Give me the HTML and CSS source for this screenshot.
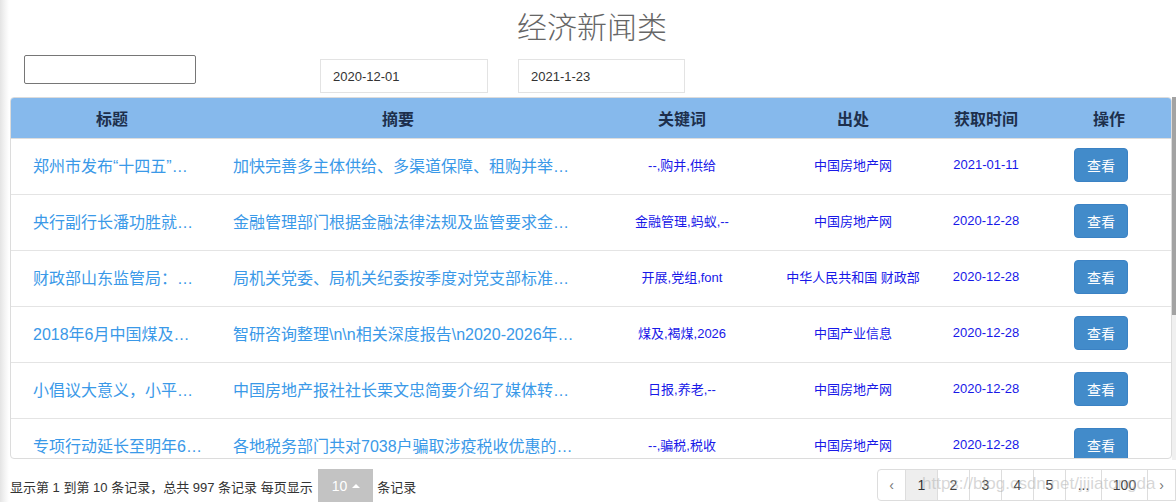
FILE: index.html
```html
<!DOCTYPE html>
<html lang="zh-CN">
<head>
<meta charset="utf-8">
<title>经济新闻类</title>
<link rel="stylesheet" href="styles.css">
</head>
<body>
<div class="page">
  <h1 class="title">经济新闻类</h1>
  <div class="filters">
    <input class="search" type="text">
    <div class="date-box first">2020-12-01</div>
    <div class="date-box second">2021-1-23</div>
  </div>
  <div class="table-area">
    <div class="table-wrap">
      <table class="news">
        <colgroup>
          <col class="c-title"><col class="c-summary"><col class="c-kw"><col class="c-src"><col class="c-date"><col class="c-op">
        </colgroup>
        <thead>
          <tr><th>标题</th><th>摘要</th><th>关键词</th><th>出处</th><th>获取时间</th><th>操作</th></tr>
        </thead>
        <tbody>
          <tr>
            <td class="t-title">郑州市发布“十四五”…</td>
            <td class="t-summary">加快完善多主体供给、多渠道保障、租购并举…</td>
            <td class="t-small">--,购并,供给</td>
            <td class="t-small">中国房地产网</td>
            <td class="t-date">2021-01-11</td>
            <td class="t-op"><button class="view-btn">查看</button></td>
          </tr>
          <tr>
            <td class="t-title">央行副行长潘功胜就…</td>
            <td class="t-summary">金融管理部门根据金融法律法规及监管要求金…</td>
            <td class="t-small">金融管理,蚂蚁,--</td>
            <td class="t-small">中国房地产网</td>
            <td class="t-date">2020-12-28</td>
            <td class="t-op"><button class="view-btn">查看</button></td>
          </tr>
          <tr>
            <td class="t-title">财政部山东监管局：…</td>
            <td class="t-summary">局机关党委、局机关纪委按季度对党支部标准…</td>
            <td class="t-small">开展,党组,font</td>
            <td class="t-small">中华人民共和国 财政部</td>
            <td class="t-date">2020-12-28</td>
            <td class="t-op"><button class="view-btn">查看</button></td>
          </tr>
          <tr>
            <td class="t-title">2018年6月中国煤及…</td>
            <td class="t-summary">智研咨询整理\n\n相关深度报告\n2020-2026年…</td>
            <td class="t-small">煤及,褐煤,2026</td>
            <td class="t-small">中国产业信息</td>
            <td class="t-date">2020-12-28</td>
            <td class="t-op"><button class="view-btn">查看</button></td>
          </tr>
          <tr>
            <td class="t-title">小倡议大意义，小平…</td>
            <td class="t-summary">中国房地产报社社长栗文忠简要介绍了媒体转…</td>
            <td class="t-small">日报,养老,--</td>
            <td class="t-small">中国房地产网</td>
            <td class="t-date">2020-12-28</td>
            <td class="t-op"><button class="view-btn">查看</button></td>
          </tr>
          <tr>
            <td class="t-title">专项行动延长至明年6…</td>
            <td class="t-summary">各地税务部门共对7038户骗取涉疫税收优惠的…</td>
            <td class="t-small">--,骗税,税收</td>
            <td class="t-small">中国房地产网</td>
            <td class="t-date">2020-12-28</td>
            <td class="t-op"><button class="view-btn">查看</button></td>
          </tr>
        </tbody>
      </table>
    </div>
    <div class="scrollbar"><div class="thumb"></div></div>
  </div>
  <div class="footer">
    <div class="info">
      <span>显示第 1 到第 10 条记录，总共 997 条记录 每页显示</span>
      <span class="size-btn">10 <span class="caret"></span></span>
      <span>条记录</span>
    </div>
    <ul class="pagination">
      <li class="pg arrow">‹</li>
      <li class="pg active">1</li>
      <li class="pg">2</li>
      <li class="pg">3</li>
      <li class="pg">4</li>
      <li class="pg">5</li>
      <li class="pg gap">...</li>
      <li class="pg last">100</li>
      <li class="pg arrow">›</li>
    </ul>
  </div>
  <div class="watermark">https://blog.csdn.net/jijiatongda</div>
</div>
</body>
</html>
```

FILE: styles.css
```css
html, body {
  margin: 0;
  padding: 0;
  overflow: hidden;
}

body {
  background: linear-gradient(to right, #e4e4e4 0, #f4f4f4 5px, #ffffff 9px);
  font-family: "Liberation Sans", "Noto Sans CJK SC", sans-serif;
  color: #333;
}

.page {
  position: relative;
  width: 1176px;
  height: 502px;
  overflow: hidden;
}

.title {
  margin: 0;
  height: 55px;
  line-height: 56px;
  padding-left: 8px;
  text-align: center;
  font-size: 30px;
  font-weight: 300;
  color: #666;
}

.filters {
  display: flex;
  align-items: flex-start;
  height: 42px;
}

.search {
  margin: 0 0 0 24px;
  width: 172px;
  height: 29px;
  box-sizing: border-box;
  border: 1px solid #767676;
  border-radius: 2px;
  padding: 0;
  background: #fff;
}

.date-box {
  display: flex;
  align-items: center;
  box-sizing: border-box;
  height: 34px;
  width: 168px;
  margin-top: 4px;
  padding-left: 12px;
  border: 1px solid #e3e3e3;
  font-size: 13px;
  color: #333;
  background: #fff;
}

.date-box.first {
  margin-left: 124px;
}

.date-box.second {
  margin-left: 30px;
  width: 167px;
}

.table-area {
  display: flex;
  margin-left: 10px;
  height: 363px;
}

.table-wrap {
  width: 1162px;
  height: 362px;
  box-sizing: border-box;
  border: 1px solid #dcdcdc;
  border-radius: 4px;
  overflow: hidden;
  background: #fff;
}

.scrollbar {
  width: 4px;
  height: 363px;
  background: #f0f0f0;
}

.thumb {
  height: 218px;
  background: #a3a3a3;
}

.news {
  width: 1160px;
  table-layout: fixed;
  border-collapse: collapse;
}

.c-title { width: 202px; }
.c-summary { width: 370px; }
.c-kw { width: 198px; }
.c-src { width: 144px; }
.c-date { width: 122px; }
.c-op { width: 124px; }

.news th {
  height: 40px;
  padding: 0;
  background: #86b9ec;
  border-bottom: 1px solid #dddddd;
  font-size: 16px;
  font-weight: bold;
  color: #1d2f4c;
  text-align: center;
  vertical-align: middle;
}

.news td {
  height: 51px;
  padding: 0 0 4px 0;
  border-bottom: 1px solid #e4e4e4;
  text-align: center;
  vertical-align: middle;
  white-space: nowrap;
  overflow: hidden;
}

.news td.t-title {
  text-align: left;
  padding-left: 22px;
  font-size: 16px;
  color: #3a99e8;
}

.news td.t-summary {
  text-align: left;
  padding-left: 20px;
  font-size: 16px;
  color: #3a99e8;
}

.news td.t-small {
  font-size: 13px;
  color: #1818e8;
}

.news td.t-date {
  font-size: 13px;
  color: #1818e8;
}

.news td.t-op {
  padding-right: 16px;
}

.view-btn {
  width: 54px;
  height: 34px;
  padding: 0;
  border: 1px solid #3b82c4;
  border-radius: 4px;
  background: #428bca;
  color: #fff;
  font-family: "Liberation Sans", "Noto Sans CJK SC", sans-serif;
  font-size: 14px;
}

.footer {
  display: flex;
  justify-content: space-between;
  align-items: flex-start;
  margin-top: 9px;
  padding-left: 10px;
}

.info {
  display: flex;
  align-items: center;
  height: 34px;
  font-size: 13px;
  color: #333;
}

.size-btn {
  display: flex;
  align-items: center;
  height: 34px;
  margin: 0 4px 0 5px;
  padding: 0 13px 0 14px;
  background: #c3c3c3;
  color: #fff;
  font-size: 14px;
}

.caret {
  display: inline-block;
  margin-left: 5px;
  width: 0;
  height: 0;
  border-left: 4px solid transparent;
  border-right: 4px solid transparent;
  border-bottom: 4px solid #fff;
}

.pagination {
  display: flex;
  list-style: none;
  margin: 0;
  padding: 0;
}

.pg {
  box-sizing: border-box;
  width: 33px;
  height: 32px;
  line-height: 30px;
  padding: 0;
  margin-left: -1px;
  border: 1px solid #dddddd;
  text-align: center;
  font-size: 14px;
  color: #444;
  background: #fff;
}

.pg:first-child {
  margin-left: 0;
  border-radius: 4px 0 0 4px;
}

.pg.arrow {
  width: 29px;
  color: #777;
}

.pg.gap {
  width: 37px;
}

.pg.last {
  width: 47px;
}

.pg.active {
  background: #eeeeee;
  color: #333;
}

.watermark {
  position: absolute;
  left: 922px;
  top: 474px;
  font-size: 17px;
  color: rgba(175, 175, 175, 0.5);
  white-space: nowrap;
}
```
